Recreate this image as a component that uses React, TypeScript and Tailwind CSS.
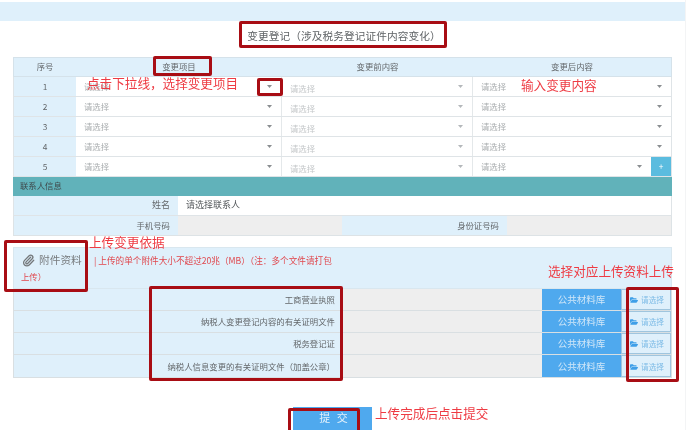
import { Paperclip } from "lucide-react";
import { FaFolderOpen } from "react-icons/fa";

const uploads = [
  { name: "工商营业执照", height: "h-[22px]" },
  { name: "纳税人变更登记内容的有关证明文件", height: "h-[22px]" },
  { name: "税务登记证", height: "h-[22px]" },
  { name: "纳税人信息变更的有关证明文件（加盖公章）", height: "h-[23px]" },
];

function Caret({ light }: { light?: boolean }) {
  return (
    <svg width="5" height="3" viewBox="0 0 5 3" className="shrink-0">
      <path d="M0 0h5L2.5 3z" fill={light ? "#b4b8bb" : "#8a8e91"} />
    </svg>
  );
}

function Select({ light }: { light?: boolean }) {
  return (
    <div className="flex flex-1 items-center justify-between pb-[1px] pl-2 pr-[9px]">
      <span className={light ? "pt-[5px] text-[#c4c7c9]" : "text-[#a9adaf]"}>请选择</span>
      <Caret light={light} />
    </div>
  );
}

function Mark({ className }: { className: string }) {
  return <div className={`absolute rounded-[2px] border-[3px] border-[#a80d14] ${className}`} />;
}

function Note({ className, children }: { className: string; children: string }) {
  return (
    <div className={`absolute text-[12.6px] leading-none whitespace-nowrap text-[#ee3b43] ${className}`}>
      {children}
    </div>
  );
}

export default function App() {
  return (
    <div className="relative h-[430px] w-[700px] overflow-hidden bg-white text-[8.4px] text-[#63676a] blur-[0.4px] [font-family:'Noto_Sans_CJK_SC','Liberation_Sans',sans-serif]">
      <div className="h-[430px] w-[686px] border-r border-[#f3f4f5] pt-[2px]">
        <div className="h-[19px] bg-[#dff0fb]" />

        <div className="flex h-[36px] items-center justify-center pb-[6px] pl-[3px] text-[10.7px] tracking-[0.05px] text-[#5f6366]">
          变更登记（涉及税务登记证件内容变化）
        </div>

        <div className="ml-[13px] w-[659px]">
          <div className="flex h-[20px] items-center border border-[#d5e2ea] bg-[#dff0fb] pb-[2px] text-center">
            <div className="w-[62px]">序号</div>
            <div className="w-[206px]">变更项目</div>
            <div className="w-[191px]">变更前内容</div>
            <div className="flex-1">变更后内容</div>
          </div>

          {[1, 2, 3, 4, 5].map((n) => (
            <div key={n} className="flex h-[20px] items-stretch border-x border-b border-[#dfe4e7]">
              <div className="flex w-[62px] items-center justify-center bg-[#dff0fb] pb-[1px]">{n}</div>
              <div className="flex w-[206px] border-r border-[#e4e8ea]">
                <Select />
              </div>
              <div className="flex w-[191px] border-r border-[#e4e8ea]">
                <Select light />
              </div>
              <div className="flex flex-1">
                <Select />
                {n === 5 && (
                  <div className="flex w-[20px] items-center justify-center bg-[#5bbcdf] text-white">+</div>
                )}
              </div>
            </div>
          ))}

          <div className="flex h-[19px] items-center bg-[#61b2ba] pb-[3px] pl-[7px] text-[#3f4a4d]">联系人信息</div>

          <div className="flex h-[20px] border-x border-b border-[#dfe4e7]">
            <div className="flex w-[164px] items-center justify-end bg-[#dff0fb] pb-[1px] pr-2 text-[9px]">姓名</div>
            <div className="flex flex-1 items-center pb-[1px] pl-2 text-[9px] text-[#55595c]">请选择联系人</div>
          </div>
          <div className="flex h-[20px] border-x border-b border-[#dde3e6]">
            <div className="flex w-[164px] items-center justify-end bg-[#dff0fb] pb-[1px] pr-2">手机号码</div>
            <div className="w-[164px] bg-[#eeeeee]" />
            <div className="flex w-[165px] items-center justify-end bg-[#dff0fb] pb-[1px] pr-2">身份证号码</div>
            <div className="flex-1 bg-[#eeeeee]" />
          </div>

          <div className="mt-[11px] flex h-[42px] items-start border border-[#d9e7ef] bg-[#dff0fb] pt-[4px] pl-[8px]">
            <div className="w-[72px] shrink-0">
              <div className="flex items-center gap-[4px] text-[10.7px] leading-[16px] text-[#777b7e]">
                <Paperclip size={13} strokeWidth={2.4} className="text-[#74787b]" />
                <span>附件资料</span>
              </div>
              <div className="-ml-[1px] mt-[2px] text-[#e0474d]">上传）</div>
            </div>
            <div className="pt-[2px] text-[8.65px] text-[#e0474d]">| 上传的单个附件大小不超过20兆（MB）（注：多个文件请打包</div>
          </div>

          {uploads.map((row) => (
            <div key={row.name} className={`flex ${row.height} border-x border-b border-[#d9dfe2]`}>
              <div className="flex w-[328px] items-center justify-end bg-[#dff0fb] pr-[7px]">{row.name}</div>
              <div className="w-[200px] bg-[#eeeeee]" />
              <div className="flex w-[79px] items-center justify-center bg-[#4fa9ee] text-[9.5px] text-[#cfe6f8]">
                公共材料库
              </div>
              <div className="flex flex-1 items-center justify-center gap-[3px] border border-[#9fc5de] bg-[#dff0fb] pl-[2px] pt-[1px] text-[7.6px] text-[#7dbbe6]">
                <FaFolderOpen size={8} className="text-[#3f9fe8]" />
                请选择
              </div>
            </div>
          ))}
        </div>

        <div className="ml-[293px] mt-[29px] flex h-[23px] w-[79px] items-center justify-center bg-[#4fa9ee] pb-[2px] pl-[4px] text-[11px] tracking-[2px] text-[#e3f1fb]">
          提 交
        </div>
      </div>

      <Mark className="left-[239px] top-[21px] h-[27px] w-[208px]" />
      <Mark className="left-[153px] top-[56px] h-[20px] w-[59px]" />
      <Mark className="left-[257px] top-[78px] h-[18px] w-[26px]" />
      <Mark className="left-[4px] top-[240px] h-[52px] w-[84px]" />
      <Mark className="left-[149px] top-[286px] h-[95px] w-[194px]" />
      <Mark className="left-[626px] top-[287px] h-[95px] w-[53px]" />
      <Mark className="left-[288px] top-[408px] h-[26px] w-[72px]" />

      <Note className="left-[87px] top-[77px]">点击下拉线，选择变更项目</Note>
      <Note className="left-[521px] top-[79px]">输入变更内容</Note>
      <Note className="left-[89px] top-[236px]">上传变更依据</Note>
      <Note className="left-[548px] top-[265px]">选择对应上传资料上传</Note>
      <Note className="left-[375px] top-[407px]">上传完成后点击提交</Note>
    </div>
  );
}
